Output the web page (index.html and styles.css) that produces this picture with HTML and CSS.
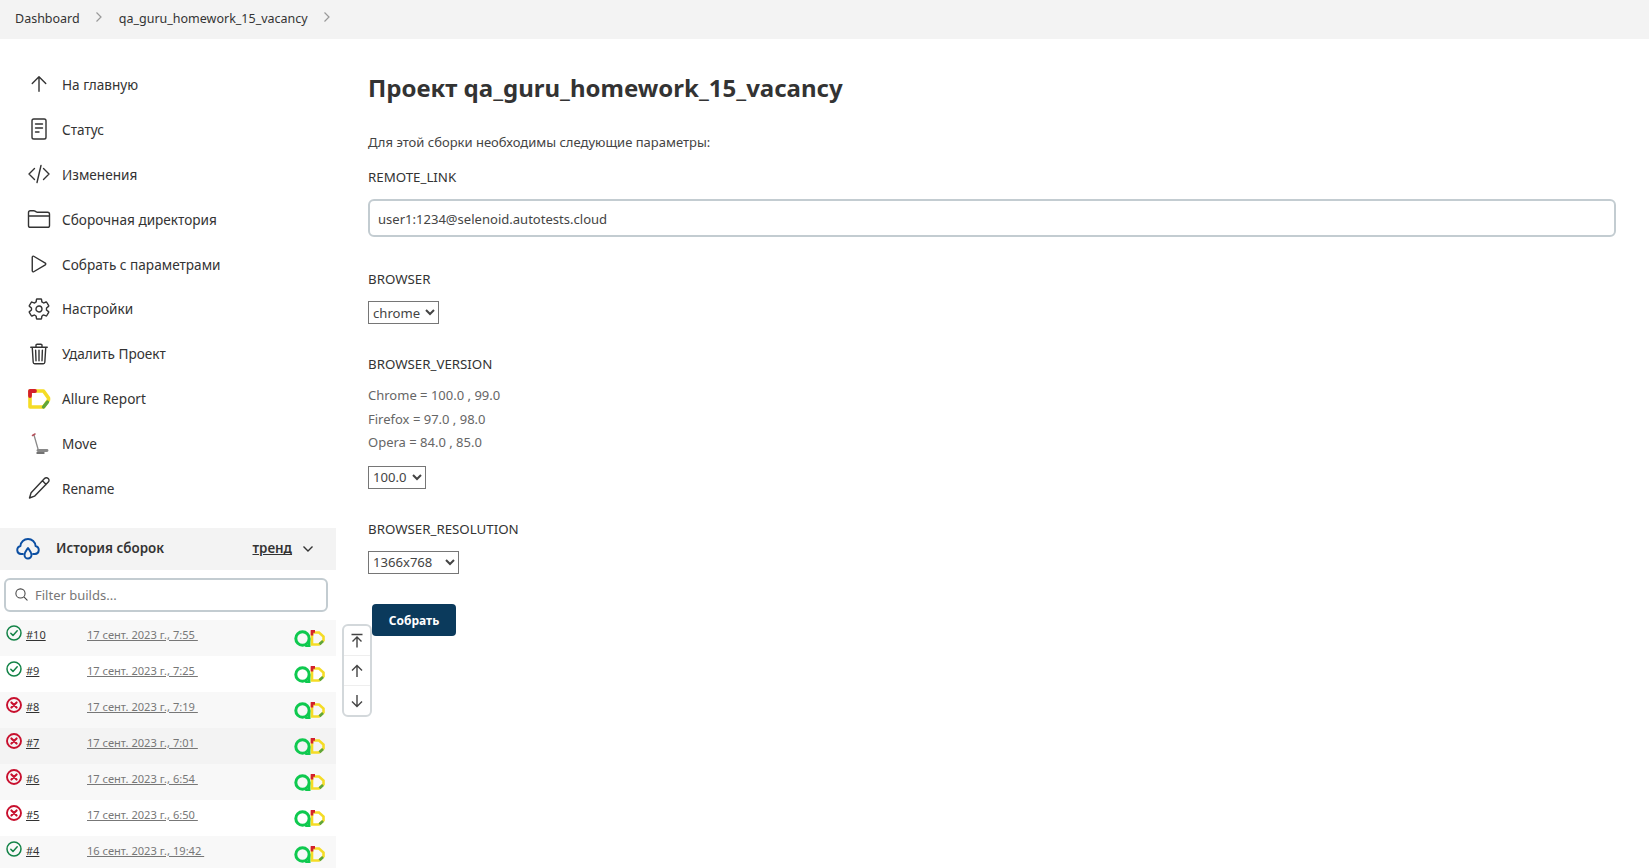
FILE: index.html
```html
<!DOCTYPE html>
<html lang="en">
<head>
    <meta charset="UTF-8">
    <meta name="viewport" content="width=device-width, initial-scale=1.0">
    <title>qa_guru_homework_15_vacancy</title>
    <link rel="stylesheet" href="styles.css">
</head>
<body>
    <svg class="sprite" aria-hidden="true">
        <symbol id="icon-ok" viewBox="0 0 16 16">
            <circle cx="8" cy="8" r="7" fill="none" stroke="#138347" stroke-width="1.5"/>
            <path d="M4.8 8.2l2.2 2.2 4.2-4.6" fill="none" stroke="#138347" stroke-width="1.5" stroke-linecap="round" stroke-linejoin="round"/>
        </symbol>
        <symbol id="icon-fail" viewBox="0 0 16 16">
            <circle cx="8" cy="8" r="7" fill="none" stroke="#c8102e" stroke-width="1.9"/>
            <path d="M5.4 5.4l5.2 5.2M10.6 5.4l-5.2 5.2" fill="none" stroke="#c8102e" stroke-width="2.1" stroke-linecap="round"/>
        </symbol>
        <symbol id="icon-allure-pair" viewBox="0 0 31 17">
            <circle cx="8.5" cy="8.5" r="6.700" fill="none" stroke="#0fc94f" stroke-width="3"/>
            <path d="M15.200 8.500v7.500h-4" fill="none" stroke="#0fc94f" stroke-width="2.600"/>
            <path d="M18 2.500h7l4.500 4v4l-4.500 4h-7z" fill="none" stroke="#f5dc26" stroke-width="2.600"/>
            <path d="M18 5.500V1.400h3" fill="none" stroke="#d3202c" stroke-width="2.600"/>
            <path d="M29 11l-3.500 3.200" fill="none" stroke="#5fa63a" stroke-width="2.600"/>
        </symbol>
    </svg>

    <div class="breadcrumbs">
        <a class="crumb" href="#">Dashboard</a>
        <svg class="crumb-sep" viewBox="0 0 8 12"><path d="M1.500 1.500L6 6l-4.500 4.500"/></svg>
        <a class="crumb" href="#">qa_guru_homework_15_vacancy</a>
        <svg class="crumb-sep" viewBox="0 0 8 12"><path d="M1.500 1.500L6 6l-4.500 4.500"/></svg>
    </div>

    <div class="page">
        <aside class="sidebar">
            <nav class="side-nav">
                <a class="side-item" href="#">
                    <svg class="side-icon" viewBox="0 0 512 512"><path d="M112 244l144-144 144 144M256 120v292"/></svg>
                    На главную
                </a>
                <a class="side-item" href="#">
                    <svg class="side-icon" viewBox="0 0 24 24"><rect x="5" y="2" width="14" height="20" rx="1.800"/><path d="M8.500 7h7M8.500 11h7M8.500 15h3.500"/></svg>
                    Статус
                </a>
                <a class="side-item" href="#">
                    <svg class="side-icon" viewBox="0 0 24 24"><path d="M7.500 6.500L2 12l5.500 5.500M16.500 6.500L22 12l-5.500 5.500M14 3.500L10 20.500"/></svg>
                    Изменения
                </a>
                <a class="side-item" href="#">
                    <svg class="side-icon" viewBox="0 0 512 512"><path d="M440 432H72a40 40 0 01-40-40V120a40 40 0 0140-40h75.890a40 40 0 0122.190 6.720l27.840 18.560a40 40 0 0022.190 6.720H440a40 40 0 0140 40v240a40 40 0 01-40 40zM32 192h448"/></svg>
                    Сборочная директория
                </a>
                <a class="side-item" href="#">
                    <svg class="side-icon" viewBox="0 0 512 512"><path d="M112 111v290c0 17.440 17 28.520 31 20.160l247.900-148.370c12.120-7.250 12.120-26.330 0-33.580L143 90.840c-14-8.360-31 2.720-31 20.160z"/></svg>
                    Собрать с параметрами
                </a>
                <a class="side-item" href="#">
                    <svg class="side-icon" viewBox="0 0 512 512"><path d="M262.290 192.310a64 64 0 1057.400 57.400 64.130 64.130 0 00-57.400-57.400zM416.390 256a154.340 154.340 0 01-1.530 20.790l45.210 35.460a10.810 10.810 0 012.450 13.750l-42.770 74a10.810 10.810 0 01-13.140 4.590l-44.900-18.080a16.110 16.110 0 00-15.170 1.750A164.480 164.480 0 01325 400.800a15.940 15.940 0 00-8.820 12.140l-6.730 47.890a11.080 11.080 0 01-10.680 9.170h-85.540a11.110 11.110 0 01-10.690-8.870l-6.720-47.820a16.070 16.070 0 00-9-12.220 155.300 155.300 0 01-21.460-12.570 16 16 0 00-15.110-1.710l-44.890 18.070a10.810 10.810 0 01-13.140-4.580l-42.770-74a10.800 10.800 0 012.450-13.750l38.210-30a16.050 16.050 0 006-14.080c-.36-4.170-.58-8.330-.58-12.500s.21-8.270.58-12.350a16 16 0 00-6.070-13.940l-38.190-30A10.810 10.810 0 0149.480 186l42.770-74a10.810 10.810 0 0113.140-4.590l44.900 18.080a16.110 16.110 0 0015.170-1.750A164.480 164.480 0 01187 111.200a15.940 15.940 0 008.820-12.140l6.730-47.890A11.080 11.080 0 01213.230 42h85.540a11.110 11.110 0 0110.690 8.870l6.720 47.820a16.070 16.070 0 009 12.220 155.300 155.300 0 0121.460 12.570 16 16 0 0015.110 1.710l44.890-18.070a10.810 10.810 0 0113.140 4.580l42.770 74a10.800 10.800 0 01-2.450 13.750l-38.210 30a16.050 16.050 0 00-6.050 14.080c.33 4.140.55 8.300.55 12.470z"/></svg>
                    Настройки
                </a>
                <a class="side-item" href="#">
                    <svg class="side-icon" viewBox="0 0 512 512"><path d="M112 112l20 320c.95 18.490 14.400 32 32 32h184c17.670 0 30.870-13.510 32-32l20-320M80 112h352M192 112V72a23.930 23.930 0 0124-24h80a23.930 23.930 0 0124 24v40M256 176v224M184 176l8 224M328 176l-8 224"/></svg>
                    Удалить Проект
                </a>
                <a class="side-item" href="#">
                    <svg class="side-icon side-icon-color" viewBox="0 0 24 24">
                        <path d="M3 4v16h13.500l5-7v-2l-5-7z" stroke="#f5dc26" stroke-width="3.600"/>
                        <path d="M3 9V4h5" stroke="#d3202c" stroke-width="3.800"/>
                        <path d="M20.500 15l-4 5" stroke="#5fa63a" stroke-width="3.400"/>
                    </svg>
                    Allure Report
                </a>
                <a class="side-item" href="#">
                    <svg class="side-icon side-icon-color" viewBox="0 0 24 24">
                        <path d="M7 3l4 14" stroke="#8a8a8a" stroke-width="1.300"/>
                        <path d="M5.500 3.500L8 2" stroke="#b5525c" stroke-width="1.500"/>
                        <path d="M11 18.500h9" stroke="#888" stroke-width="2.800"/>
                        <path d="M10 21h7" stroke="#444" stroke-width="1.400"/>
                    </svg>
                    Move
                </a>
                <a class="side-item" href="#">
                    <svg class="side-icon" viewBox="0 0 24 24"><path d="M17.500 2.500a2.600 2.600 0 013.800 3.600L7.500 20.200 2.500 22l1.600-5.200zM15.500 4.800l3.600 3.600"/></svg>
                    Rename
                </a>
            </nav>

            <div class="history-head">
                <svg class="history-icon" viewBox="0 0 24 22">
                    <path d="M7 16H5a4 4 0 01-.6-7.900A7.600 7.600 0 0112 1a7.600 7.600 0 017.600 7.100A4 4 0 0119 16h-2"/>
                    <path d="M12 10c1.700 2.500 3.500 4.300 3.500 7a3.500 3.500 0 01-7 0c0-2.700 1.800-4.500 3.500-7z"/>
                </svg>
                <span class="history-title">История сборок</span>
                <a class="history-trend" href="#">тренд</a>
                <svg class="history-chevron" viewBox="0 0 12 8"><path d="M1.500 1.500L6 6l4.500-4.500"/></svg>
            </div>

            <div class="filter-box">
                <svg class="filter-icon" viewBox="0 0 512 512"><path d="M221.090 64a157.090 157.090 0 10157.090 157.090A157.100 157.100 0 00221.090 64zM338.290 338.290L448 448"/></svg>
                <input class="filter-input" type="text" placeholder="Filter builds...">
            </div>

            <div class="builds">
                <div class="build-row">
                    <svg class="build-status"><use href="#icon-ok"/></svg>
                    <a class="build-num" href="#">#10</a>
                    <a class="build-date" href="#">17 сент. 2023 г., 7:55&nbsp;</a>
                    <svg class="build-allure"><use href="#icon-allure-pair"/></svg>
                </div>
                <div class="build-row">
                    <svg class="build-status"><use href="#icon-ok"/></svg>
                    <a class="build-num" href="#">#9</a>
                    <a class="build-date" href="#">17 сент. 2023 г., 7:25&nbsp;</a>
                    <svg class="build-allure"><use href="#icon-allure-pair"/></svg>
                </div>
                <div class="build-row">
                    <svg class="build-status"><use href="#icon-fail"/></svg>
                    <a class="build-num" href="#">#8</a>
                    <a class="build-date" href="#">17 сент. 2023 г., 7:19&nbsp;</a>
                    <svg class="build-allure"><use href="#icon-allure-pair"/></svg>
                </div>
                <div class="build-row build-row-hover">
                    <svg class="build-status"><use href="#icon-fail"/></svg>
                    <a class="build-num" href="#">#7</a>
                    <a class="build-date" href="#">17 сент. 2023 г., 7:01&nbsp;</a>
                    <svg class="build-allure"><use href="#icon-allure-pair"/></svg>
                </div>
                <div class="build-row">
                    <svg class="build-status"><use href="#icon-fail"/></svg>
                    <a class="build-num" href="#">#6</a>
                    <a class="build-date" href="#">17 сент. 2023 г., 6:54&nbsp;</a>
                    <svg class="build-allure"><use href="#icon-allure-pair"/></svg>
                </div>
                <div class="build-row">
                    <svg class="build-status"><use href="#icon-fail"/></svg>
                    <a class="build-num" href="#">#5</a>
                    <a class="build-date" href="#">17 сент. 2023 г., 6:50&nbsp;</a>
                    <svg class="build-allure"><use href="#icon-allure-pair"/></svg>
                </div>
                <div class="build-row">
                    <svg class="build-status"><use href="#icon-ok"/></svg>
                    <a class="build-num" href="#">#4</a>
                    <a class="build-date" href="#">16 сент. 2023 г., 19:42&nbsp;</a>
                    <svg class="build-allure"><use href="#icon-allure-pair"/></svg>
                </div>
            </div>
        </aside>

        <main class="content">
            <h1 class="project-title">Проект qa_guru_homework_15_vacancy</h1>
            <p class="intro">Для этой сборки необходимы следующие параметры:</p>

            <form class="params">
                <div class="param param-link">
                    <label class="param-name" for="remote-link">REMOTE_LINK</label>
                    <input class="param-text" id="remote-link" type="text" value="user1:1234@selenoid.autotests.cloud">
                </div>
                <div class="param param-browser">
                    <label class="param-name" for="browser">BROWSER</label>
                    <select class="param-select select-browser" id="browser"><option>chrome</option></select>
                </div>
                <div class="param param-version">
                    <label class="param-name" for="version">BROWSER_VERSION</label>
                    <div class="param-desc">
                        <div>Chrome = 100.0 , 99.0</div>
                        <div>Firefox = 97.0 , 98.0</div>
                        <div>Opera = 84.0 , 85.0</div>
                    </div>
                    <select class="param-select select-version" id="version"><option>100.0</option></select>
                </div>
                <div class="param param-resolution">
                    <label class="param-name" for="resolution">BROWSER_RESOLUTION</label>
                    <select class="param-select select-resolution" id="resolution"><option>1366x768</option></select>
                </div>
                <button class="build-button" type="submit">Собрать</button>
            </form>
        </main>
    </div>

    <div class="scroll-tools">
        <button class="scroll-tool" type="button">
            <svg viewBox="0 0 16 16"><path d="M2.500 1.500h11M3.500 8.500L8 4l4.500 4.500M8 4.500v10"/></svg>
        </button>
        <button class="scroll-tool" type="button">
            <svg viewBox="0 0 16 16"><path d="M3 7.500L8 2.500l5 5M8 3v11"/></svg>
        </button>
        <button class="scroll-tool" type="button">
            <svg viewBox="0 0 16 16"><path d="M3 8.500l5 5 5-5M8 13V2"/></svg>
        </button>
    </div>
</body>
</html>
```

FILE: styles.css
```css
html, body {
    height: 100%;
    overflow: hidden;
}

body {
    margin: 0;
    font-family: "Noto Sans", sans-serif;
    font-size: 14px;
    color: #333;
    background-color: #fff;
}

a {
    color: inherit;
    text-decoration: none;
}

.sprite {
    display: none;
}

.breadcrumbs {
    display: flex;
    align-items: center;
    height: 39px;
    padding: 0 0 3px 15px;
    box-sizing: border-box;
    background-color: #f3f3f3;
    font-size: 12.500px;
}

.crumb-sep {
    width: 8px;
    height: 12px;
    margin: -2px 16px 0 15px;
    fill: none;
    stroke: #999;
    stroke-width: 1.2;
}

.page {
    display: flex;
}

.sidebar {
    flex: none;
    width: 336px;
}

.side-nav {
    padding-top: 23px;
}

.side-item {
    display: flex;
    align-items: center;
    gap: 11px;
    height: 44.900px;
    padding-left: 27px;
    font-size: 13.600px;
}

.side-icon {
    flex: none;
    width: 24px;
    height: 24px;
    fill: none;
    stroke: #333;
    stroke-width: 1.4;
    stroke-linecap: round;
    stroke-linejoin: round;
}

.side-icon[viewBox="0 0 512 512"] {
    stroke-width: 30;
}

.side-icon-color {
    stroke: none;
}

.history-head {
    display: flex;
    align-items: center;
    height: 42px;
    margin-top: 17px;
    padding-left: 16px;
    background-color: #f3f3f3;
}

.history-icon {
    flex: none;
    width: 24px;
    height: 22px;
    fill: none;
    stroke: #0b4ea2;
    stroke-width: 1.900;
    stroke-linecap: round;
    stroke-linejoin: round;
}

.history-title {
    margin: -1px 0 0 16px;
    font-weight: 600;
    font-size: 13.400px;
}

.history-trend {
    margin: -1px 0 0 auto;
    font-weight: 600;
    font-size: 13.400px;
    text-decoration: underline;
}

.history-chevron {
    width: 12px;
    height: 8px;
    margin: 0 22px 0 10px;
    fill: none;
    stroke: #333;
    stroke-width: 1.400;
}

.filter-box {
    display: flex;
    align-items: center;
    height: 34px;
    margin: 8px 8px 8px 4px;
    padding-left: 8px;
    border: 2px solid #c3ccd1;
    border-radius: 6px;
    box-sizing: border-box;
}

.filter-icon {
    flex: none;
    width: 15px;
    height: 15px;
    fill: none;
    stroke: #444;
    stroke-width: 36;
    stroke-linecap: round;
}

.filter-input {
    flex: 1;
    min-width: 0;
    margin-left: 4px;
    border: none;
    outline: none;
    background: transparent;
    font-family: inherit;
    font-size: 13px;
    color: #333;
}

.filter-input::placeholder {
    color: #777;
}

.builds {
    height: 248px;
    overflow: hidden;
}

.build-row {
    display: flex;
    align-items: flex-start;
    height: 36px;
    padding-left: 6px;
    line-height: 30px;
    font-size: 11px;
    box-sizing: border-box;
}

.build-row:nth-child(odd) {
    background-color: #f8f8f8;
}

.build-row-hover {
    background-color: #f3f3f3;
}

.build-status {
    flex: none;
    width: 16px;
    height: 16px;
    margin-top: 5px;
}

.build-num {
    flex: none;
    width: 61px;
    margin-left: 4px;
    text-decoration: underline;
}

.build-date {
    flex: 1;
    font-size: 11.100px;
    color: #777;
    text-decoration: underline;
}

.build-allure {
    flex: none;
    width: 31px;
    height: 17px;
    margin: 10px 11px 0 0;
}

.content {
    flex: 1;
    min-width: 0;
    padding: 0 33px 0 32px;
}

.project-title {
    margin: 30px 0 0;
    font-size: 24px;
    line-height: 38px;
    font-weight: 700;
}

.intro {
    margin: 25px 0 0;
    font-size: 13px;
    line-height: 20px;
    color: #444;
}

.param-name {
    display: block;
    font-size: 13.300px;
    line-height: 20px;
}

.param-link {
    margin-top: 15px;
}

.param-text {
    display: block;
    width: 100%;
    height: 38px;
    margin-top: 12px;
    padding: 2px 8px 0;
    border: 2px solid #c3ccd1;
    border-radius: 6px;
    box-sizing: border-box;
    font-family: inherit;
    font-size: 13.050px;
    color: #444;
}

.param-browser {
    margin-top: 32px;
}

.param-version {
    margin-top: 30px;
}

.param-resolution {
    margin-top: 30px;
}

.param-select {
    display: block;
    height: 23px;
    margin-top: 12px;
    border: 1px solid #767676;
    border-radius: 0;
    background-color: #fff;
    font-family: inherit;
    font-size: 13.100px;
    color: #444;
}

.select-browser {
    width: 71px;
}

.select-version {
    width: 58px;
}

.select-resolution {
    width: 91px;
}

.param-desc {
    margin-top: 10px;
    line-height: 23.500px;
    font-size: 13px;
    color: #666;
}

.param-desc + .param-select {
    margin-top: 11px;
}

.build-button {
    display: block;
    width: 84px;
    height: 32px;
    margin: 30px 0 0 4px;
    padding: 1px 0 0;
    border: none;
    border-radius: 4px;
    background-color: #0b3a5c;
    color: #fff;
    font-family: inherit;
    font-size: 12px;
    font-weight: 700;
}

.scroll-tools {
    position: absolute;
    left: 342px;
    top: 624px;
    display: flex;
    flex-direction: column;
    width: 30px;
    height: 93px;
    border: 2px solid #d3d8db;
    border-radius: 6px;
    box-sizing: border-box;
    background-color: #fff;
}

.scroll-tool {
    flex: 1;
    padding: 0;
    border: none;
    border-bottom: 1px solid #eee;
    background: none;
}

.scroll-tool:last-child {
    border-bottom: none;
}

.scroll-tool svg {
    display: block;
    width: 16px;
    height: 16px;
    margin: 0 auto;
    fill: none;
    stroke: #444;
    stroke-width: 1.400;
}
```
